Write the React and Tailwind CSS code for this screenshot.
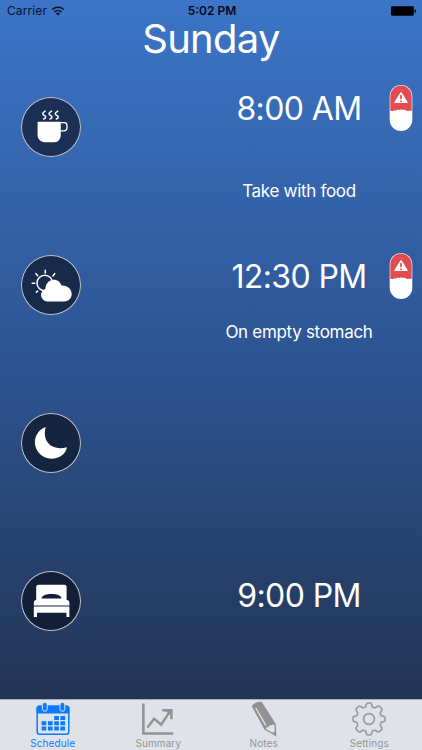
import React, { useState } from 'react';

const CoffeeIcon = () => (
  <svg viewBox="0 0 60 60" className="w-full h-full" fill="none">
    <path d="M16.6 24.8h23.2V38c0 4-2.8 7.2-6.2 7.2H23.4c-3.8 0-6.8-3.4-6.8-7.2z" fill="#fff" />
    <path d="M39.8 25.6h3.4q2.8 0 2.8 2.8v2q0 3.4-3.4 3.4h-3.2" stroke="#fff" strokeWidth="1.3" />
    <path
      d="M24.2 14.1c-4.2 2.8-2.5 3.4-.5 4.6s.7 2.8-1 3.3M30.5 14.1c-4.2 2.8-2.5 3.4-.5 4.6s.7 2.8-1 3.3M36.8 14.1c-4.2 2.8-2.5 3.4-.5 4.6s.7 2.8-1 3.3"
      stroke="#fff"
      strokeWidth="1.4"
      strokeLinecap="round"
    />
  </svg>
);

const CloudSunIcon = () => (
  <svg viewBox="0 0 60 60" className="w-full h-full" fill="none">
    <circle cx="23.8" cy="28" r="7.8" stroke="#fff" strokeWidth="1.5" />
    <path
      d="M24.3 15.2v2.8M33.7 18.6l-1.7 2.4M15 18.7l1.7 2M11.2 28.2h2.6M15.5 37.2l1.2-1"
      stroke="#fff"
      strokeWidth="1.6"
      strokeLinecap="round"
    />
    <path
      d="M26.4 46.4a6.4 6.4 0 0 1-6.4-6.3c0-3.1 2-5.4 4.4-6.2.1-5.1 3.6-9.1 8.5-9.1 3.9 0 6.5 2.3 7.6 5.8 5.8-.5 10.2 3.5 10.2 8.4 0 4.2-3.2 7.4-7.4 7.4z"
      fill="#fff"
    />
  </svg>
);

const MoonIcon = () => (
  <svg viewBox="0 0 60 60" className="w-full h-full">
    <path d="M24.8 14.1C11.5 18.8 10.5 36 21.5 43c9.8 6.1 22.7 1 24.5-8.8C29.5 38.5 20.8 27.2 24.8 14.1z" fill="#fff" />
  </svg>
);

const BedIcon = () => (
  <svg viewBox="0 0 60 60" className="w-full h-full">
    <path d="M17.4 13.8h26q2.2 0 2.2 2.2v12.8q2.8.5 2.8 3v2.8H12.8v-2.8q0-2.5 2.4-3V16q0-2.2 2.2-2.2z" fill="#fff" />
    <path d="M20.6 27.4c0-5.8 19.8-5.8 19.8 0z" fill="#131f36" />
    <path d="M12.8 35.6h35.6v10.3h-3v-4.2H16v4.2h-3.2z" fill="#fff" />
  </svg>
);

const PillIcon = () => (
  <svg viewBox="0 0 24 48" className="w-6 h-12">
    <rect x=".7" y="1" width="22.6" height="46" rx="11.3" fill="#fff" />
    <path
      d="M1.3 12.2a10.7 10.7 0 0 1 21.4 0v14.2c-1 .7-1.8.6-2.5.1-1.1.8-2.1.6-2.8-.1-1 .1-1.5-.2-2-.8-1.2.8-2.3.5-3.3-.3-1.2.9-2.2 1-3.3.3-1 1-2 1.2-3.2.7-1.2 1.1-2.9 1-4.3.1z"
      fill="#e24c50"
    />
    <path d="M12 8.9 18 18.3H6z" fill="#fff" stroke="#fff" strokeWidth="1.5" strokeLinejoin="round" />
    <path d="M12 11v4.2M12 16.4v1.5" stroke="#e24c50" strokeWidth="1.7" />
  </svg>
);

const WifiIcon = () => (
  <svg viewBox="0 0 14 10" className="w-3.5 h-2.5" fill="none" stroke="#091426">
    <path d="M1.2 3.6a8.5 8.5 0 0 1 11.6 0M3.3 5.9a5.4 5.4 0 0 1 7.4 0" strokeWidth="1.4" />
    <path d="M7 9.6 4.9 7.5a3.2 3.2 0 0 1 4.2 0z" fill="#091426" stroke="none" />
  </svg>
);

const BatteryIcon = () => (
  <svg viewBox="0 0 26 10" className="w-[26px] h-2.5">
    <rect x="0" y="0.2" width="22.8" height="9.6" rx="1.4" />
    <path d="M23.6 3.2c1.9.2 1.9 3.4 0 3.6z" />
  </svg>
);

const CalendarIcon = () => (
  <svg viewBox="0 0 34 34" className="w-[34px] h-[34px]">
    <rect x="1.2" y="4.2" width="31.6" height="28" rx="2.5" fill="none" stroke="#0a7aff" strokeWidth="1.5" />
    <path d="M.6 11.6V6.2q0-2.6 2.6-2.6h27.6q2.6 0 2.6 2.6v5.4z" fill="#0a7aff" />
    <g fill="#0a7aff" stroke="#dfe2e9" strokeWidth="1">
      <rect x="6.4" y=".3" width="4.8" height="9" rx="2.4" />
      <rect x="24" y=".3" width="4.8" height="9" rx="2.4" />
    </g>
    <path
      d="M18.2 13.9h4.7v4.1h-4.7zM24.4 13.9h4.7v4.1h-4.7zM5.6 19.2h4.7v4.1H5.6zM11.9 19.2h4.7v4.1h-4.7zM18.2 19.2h4.7v4.1h-4.7zM24.4 19.2h4.7v4.1h-4.7zM5.6 24.5h4.7v4.1H5.6zM11.9 24.5h4.7v4.1h-4.7zM18.2 24.5h4.7v4.1h-4.7zM24.4 24.5h4.7v4.1h-4.7z"
      fill="#0a7aff"
    />
  </svg>
);

const ChartIcon = () => (
  <svg viewBox="0 0 34 34" className="w-[34px] h-[34px]" fill="none" stroke="#929292">
    <path d="M2.4 1.5v29.9h29.8" strokeWidth="2.5" />
    <path d="m6.5 25.5 6.6-8.8 7 6 9.4-14" strokeWidth="2.3" />
    <path d="M21.2 8.2h9.2v9" strokeWidth="2.5" />
    <path d="m24.4 9 5.2 4.6V8.4z" fill="#929292" stroke="none" />
  </svg>
);

const PencilIcon = () => (
  <svg viewBox="0 0 34 36" className="w-[34px] h-9">
    <path d="M4.9 5.6C4.9 2.9 12.2-.3 15 1.3l13.8 21.6.6 12.6-12-7.1z" fill="#929292" />
    <path d="m8.8 7 10.2 17.6" stroke="#dfe2e9" strokeWidth="1.3" />
    <path d="M19 28c.1-1.7 1.2-2.3 2.6-1.8.2-1.6 1.3-2.2 2.7-1.6.5-1.1 1.8-1.4 3.2-.6l.3 6.4-2.3 1.3z" fill="#dfe2e9" />
  </svg>
);

const GearIcon = () => (
  <svg viewBox="-17 -17 34 34" className="w-[34px] h-[34px]" fill="none" stroke="#999" strokeWidth="1.6" strokeLinejoin="round">
    <path
      d="M-2.6-14.7Q-2.4-16-1.2-16H1.2Q2.4-16 2.6-14.7L3.2-12.3Q4.4-11.1 6.2-11.3L8.6-12.7Q9.7-13.3 10.6-12.5L12.5-10.6Q13.3-9.7 12.7-8.6L11.3-6.2Q11.1-4.4 12.3-3.2L14.7-2.6Q16-2.4 16-1.2V1.2Q16 2.4 14.7 2.6L12.3 3.2Q11.1 4.4 11.3 6.2L12.7 8.6Q13.3 9.7 12.5 10.6L10.6 12.5Q9.7 13.3 8.6 12.7L6.2 11.3Q4.4 11.1 3.2 12.3L2.6 14.7Q2.4 16 1.2 16H-1.2Q-2.4 16-2.6 14.7L-3.2 12.3Q-4.4 11.1-6.2 11.3L-8.6 12.7Q-9.7 13.3-10.6 12.5L-12.5 10.6Q-13.3 9.7-12.7 8.6L-11.3 6.2Q-11.1 4.4-12.3 3.2L-14.7 2.6Q-16 2.4-16 1.2V-1.2Q-16-2.4-14.7-2.6L-12.3-3.2Q-11.1-4.4-11.3-6.2L-12.7-8.6Q-13.3-9.7-12.5-10.6L-10.6-12.5Q-9.7-13.3-8.6-12.7L-6.2-11.3Q-4.4-11.1-3.2-12.3Z"
    />
    <circle cx="0" cy="0" r="5.4" />
  </svg>
);

const slots = [
  {
    id: 'morning',
    icon: CoffeeIcon,
    circle: 'bg-[#1b3054]',
    time: '8:00 AM',
    timeClass: 'pt-[41px]',
    note: 'Take with food',
    noteClass: 'pt-[50px]',
    pillClass: 'pt-9',
  },
  {
    id: 'noon',
    icon: CloudSunIcon,
    circle: 'bg-[#182a49]',
    time: '12:30 PM',
    timeClass: 'pt-[51px]',
    note: 'On empty stomach',
    noteClass: 'pt-[23px]',
    pillClass: 'pt-[46px]',
  },
  { id: 'evening', icon: MoonIcon, circle: 'bg-[#15253f]' },
  { id: 'night', icon: BedIcon, circle: 'bg-[#131f36]', time: '9:00 PM', timeClass: 'pt-[54px]' },
];

const tabs = [
  { id: 'schedule', label: 'Schedule', icon: CalendarIcon },
  { id: 'summary', label: 'Summary', icon: ChartIcon },
  { id: 'notes', label: 'Notes', icon: PencilIcon },
  { id: 'settings', label: 'Settings', icon: GearIcon },
];

const SlotRow = ({ slot }) => {
  const Icon = slot.icon;

  return (
    <div className="flex h-[158px]">
      <div className="flex w-[102px] items-center justify-center">
        <div className={`h-[60px] w-[60px] overflow-hidden rounded-full ring-1 ring-inset ring-[#b9c4d5] ${slot.circle}`}>
          <Icon />
        </div>
      </div>
      <div className="ml-auto w-[170px] text-center text-white">
        {slot.time && (
          <div className={slot.timeClass}>
            <p className="whitespace-nowrap text-[32px] leading-10 tracking-[-0.6px]">{slot.time}</p>
          </div>
        )}
        {slot.note && (
          <div className={slot.noteClass}>
            <p className="whitespace-nowrap text-[17px] leading-6 tracking-[-0.3px]">{slot.note}</p>
          </div>
        )}
      </div>
      <div className="flex w-[38px] pl-[5px]">
        {slot.pillClass && (
          <div className={slot.pillClass}>
            <PillIcon />
          </div>
        )}
      </div>
    </div>
  );
};

const App = () => {
  const [activeTab, setActiveTab] = useState('schedule');

  return (
    <div className="flex h-[750px] w-[422px] flex-col overflow-hidden bg-linear-to-b from-[#3c75c8] via-[#2d5390] to-[#20304c] font-['Inter',sans-serif]">
      <header className="h-12 shrink-0">
        <div className="grid h-[22px] grid-cols-3 items-center pl-[7px] pr-[5px] text-[12px]">
          <div className="flex items-center gap-1 text-[#091426]">
            <span className="tracking-[0.1px]">Carrier</span>
            <WifiIcon />
          </div>
          <span className="text-center font-semibold text-[#050b16]">5:02 PM</span>
          <div className="flex justify-end">
            <BatteryIcon />
          </div>
        </div>
        <h1 className="text-center text-[40px] leading-[34px] tracking-[-0.7px] text-white">Sunday</h1>
      </header>

      <main className="flex-1">
        {slots.map((slot) => (
          <SlotRow key={slot.id} slot={slot} />
        ))}
      </main>

      <nav className="grid h-[51px] shrink-0 grid-cols-4 border-t border-[#a4abb9] bg-[#dfe2e9]">
        {tabs.map(({ id, label, icon: Icon }) => (
          <button
            key={id}
            onClick={() => setActiveTab(id)}
            className={`flex flex-col items-center ${activeTab === id ? 'text-[#0a7aff]' : 'text-[#979797]'}`}
          >
            <span className="flex h-[37px] items-center">
              <Icon />
            </span>
            <span className="text-[10px] leading-3 tracking-[0.1px]">{label}</span>
          </button>
        ))}
      </nav>
    </div>
  );
};

export default App;
